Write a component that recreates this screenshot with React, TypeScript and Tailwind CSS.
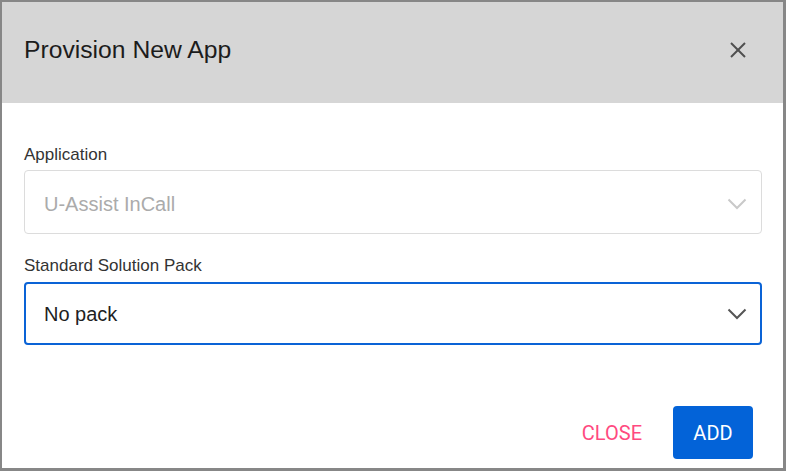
import React from "react";

function Chevron({ color }: { color: string }) {
  return (
    <svg width="20" height="12" viewBox="0 0 20 12" fill="none" className="shrink-0">
      <polyline points="1.5,1.5 10,10 18.5,1.5" stroke={color} strokeWidth="2" />
    </svg>
  );
}

export default function App() {
  return (
    <div className="w-[788px] h-[475px] bg-white">
      <div
        className="w-[786px] h-[471px] border-l-2 border-t-2 border-r-[3px] border-b-[3px] border-[#878787] bg-white flex flex-col"
        style={{ fontFamily: '"Liberation Sans", Arial, sans-serif' }}
      >
        {/* Header */}
        <div className="h-[101px] bg-[#d6d6d6] flex items-start justify-between pl-[22px] pr-[36px] pt-[34px]">
          <h1 className="text-[24.7px] leading-[28px] text-[#1c1c1c]">Provision New App</h1>
          <button className="mt-[5px]" aria-label="close">
            <svg width="18" height="18" viewBox="0 0 18 18" fill="none">
              <line x1="2" y1="2" x2="16" y2="16" stroke="#4f4f4f" strokeWidth="2" />
              <line x1="16" y1="2" x2="2" y2="16" stroke="#4f4f4f" strokeWidth="2" />
            </svg>
          </button>
        </div>

        {/* Body */}
        <div className="px-[22px] pt-[42px] pr-[21px]">
          <label className="block text-[17px] leading-[20px] text-[#333] mb-[5px]">Application</label>
          <div className="h-[64px] border border-[#dcdcdc] rounded-[4px] flex items-center justify-between pl-[19px] pr-[14px] pt-[3px]">
            <span className="text-[20px] text-[#ababab]">U-Assist InCall</span>
            <Chevron color="#c9c9c9" />
          </div>

          <label className="block text-[17px] leading-[20px] text-[#333] mt-[22px] mb-[6px]">
            Standard Solution Pack
          </label>
          <div className="h-[63px] border-2 border-[#0a63d6] rounded-[4px] flex items-center justify-between pl-[18px] pr-[13px]">
            <span className="text-[20px] text-[#1f1f1f]">No pack</span>
            <Chevron color="#555555" />
          </div>
        </div>

        {/* Footer */}
        <div className="flex justify-end items-center gap-[31px] pr-[30px] mt-[61px]" style={{ fontFamily: "Roboto, sans-serif" }}>
          <button className="text-[20px] text-[#ff4a80]">CLOSE</button>
          <button className="w-[80px] h-[53px] rounded-[4px] bg-[#0363d8] text-white text-[20px]">ADD</button>
        </div>
      </div>
    </div>
  );
}
